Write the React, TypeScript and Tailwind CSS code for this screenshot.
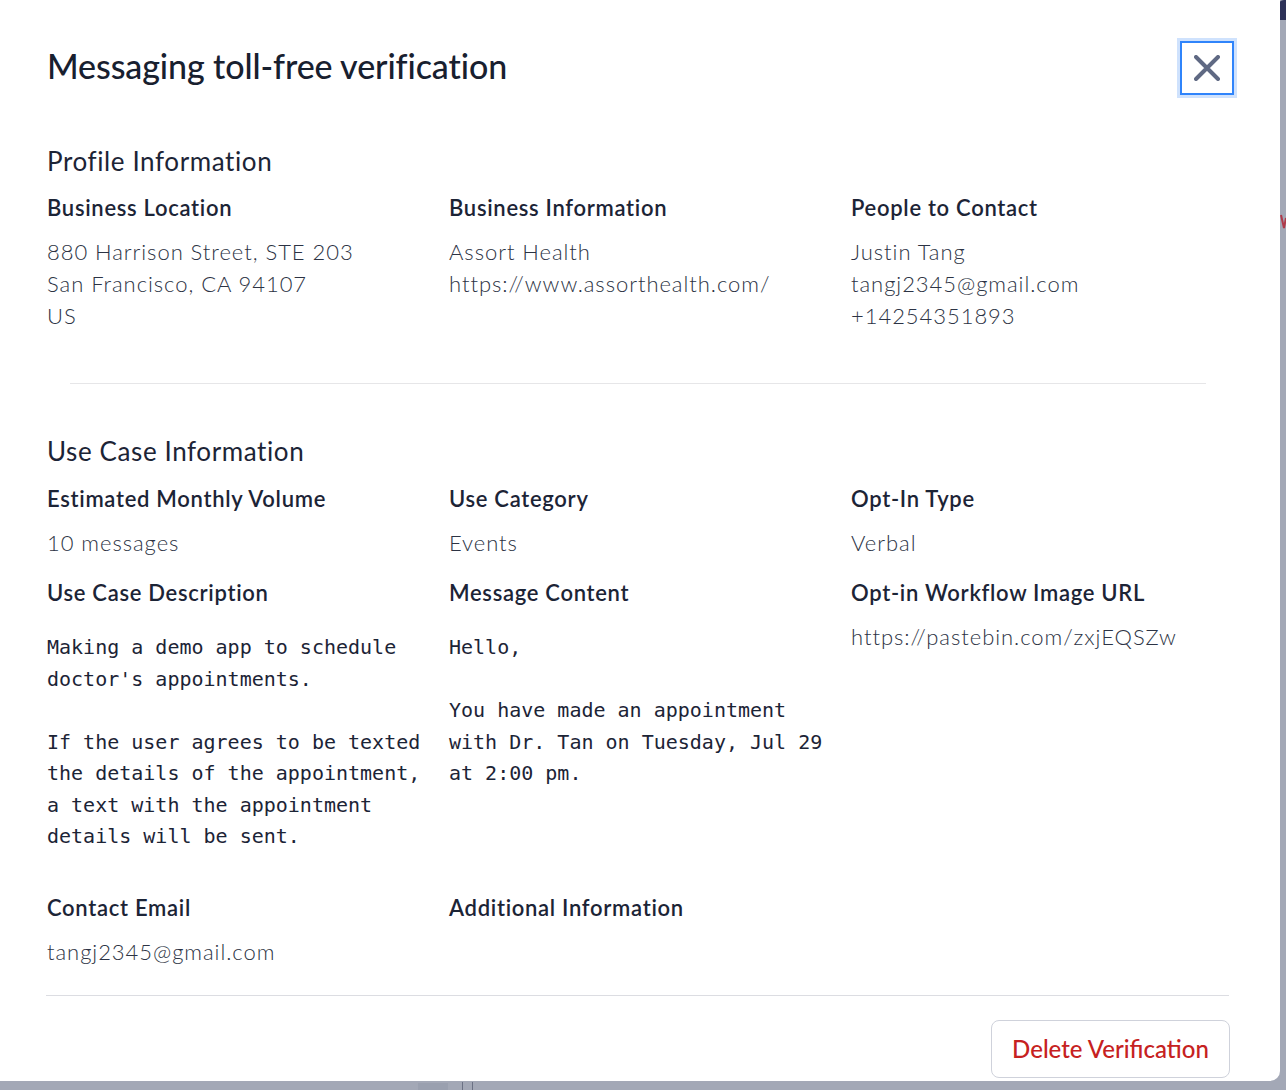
import React from "react";

const sans = { fontFamily: "Lato, 'Open Sans', sans-serif" };
const mono = { fontFamily: "'DejaVu Sans Mono', 'Liberation Mono', monospace" };

function Label({ children }: { children: React.ReactNode }) {
  return (
    <div className="text-[22px] leading-[28px] font-semibold text-[#1c2436] tracking-[0.7px]">
      {children}
    </div>
  );
}

function Value({ children, className = "" }: { children: React.ReactNode; className?: string }) {
  return (
    <div className={"text-[22px] leading-[32px] font-light text-[#2c3344] tracking-[0.95px] " + className}>
      {children}
    </div>
  );
}

function Pre({ children }: { children: React.ReactNode }) {
  return (
    <pre
      style={mono}
      className="mt-[25px] text-[20px] leading-[31.5px] text-[#1c2436] whitespace-pre-wrap"
    >
      {children}
    </pre>
  );
}

export default function App() {
  return (
    <div className="relative w-[1286px] h-[1090px] bg-[#a3a8b6] overflow-hidden" style={sans}>
      {/* background page hints */}
      <div className="absolute right-0 top-0 w-[8px] h-[20px] bg-[#2c3157] rounded-tl-[6px]" />
      <svg className="absolute left-[1280px] top-[214px]" width="6" height="16" viewBox="0 0 6 16">
        <path d="M1 1L4 14L6 4" stroke="#b03a4a" strokeWidth="2" fill="none" />
      </svg>
      <div className="absolute left-[418px] top-[1083px] w-[30px] h-[7px] bg-[#9aa0af]" />
      <div className="absolute left-[462px] top-[1082px] w-[1px] h-[8px] bg-[#6b7184]" />
      <div className="absolute left-[472px] top-[1082px] w-[1px] h-[8px] bg-[#6b7184]" />

      {/* modal */}
      <div className="absolute left-0 top-0 w-[1280px] h-[1081px] bg-white rounded-br-[10px] flex flex-col">
        <div className="flex items-center justify-between pt-[41px] pl-[47px] pr-[46px]">
          <h1 className="-mt-[5px] text-[34px] leading-[41px] font-medium text-[#18202f] tracking-[-0.1px]">
            Messaging toll-free verification
          </h1>
          <button className="w-[54px] h-[54px] border-2 border-[#2f84fb] ring-[3px] ring-[#cfe2fd] flex items-center justify-center bg-white">
            <svg width="26" height="26" viewBox="0 0 26 26" fill="none">
              <path d="M2 2L24 24M24 2L2 24" stroke="#5f6983" strokeWidth="4" strokeLinecap="round" />
            </svg>
          </button>
        </div>

        <div className="pl-[47px] pr-[51px]">
          <h2 className="mt-[50px] text-[26px] leading-[32px] font-normal text-[#1c2436] tracking-[0.6px]">
            Profile Information
          </h2>
          <div className="mt-[17px] grid grid-cols-3 gap-x-[24px]">
            <div>
              <Label>Business Location</Label>
              <Value className="mt-[14px]">
                <div>880 Harrison Street, STE 203</div>
                <div>San Francisco, CA 94107</div>
                <div>US</div>
              </Value>
            </div>
            <div>
              <Label>Business Information</Label>
              <Value className="mt-[14px]">
                <div>Assort Health</div>
                <div>https://www.assorthealth.com/</div>
              </Value>
            </div>
            <div>
              <Label>People to Contact</Label>
              <Value className="mt-[14px]">
                <div>Justin Tang</div>
                <div>tangj2345@gmail.com</div>
                <div>+14254351893</div>
              </Value>
            </div>
          </div>

          <div className="mt-[51px] mx-[23px] h-px bg-[#e6e6e8]" />

          <h2 className="mt-[51px] text-[26px] leading-[32px] font-normal text-[#1c2436] tracking-[0.6px]">
            Use Case Information
          </h2>
          <div className="mt-[18px] grid grid-cols-3 gap-x-[24px]">
            <div>
              <Label>Estimated Monthly Volume</Label>
              <Value className="mt-[14px]">10 messages</Value>
            </div>
            <div>
              <Label>Use Category</Label>
              <Value className="mt-[14px]">Events</Value>
            </div>
            <div>
              <Label>Opt-In Type</Label>
              <Value className="mt-[14px]">Verbal</Value>
            </div>
          </div>

          <div className="mt-[20px] grid grid-cols-3 gap-x-[24px]">
            <div>
              <Label>Use Case Description</Label>
              <Pre>{`Making a demo app to schedule
doctor's appointments.

If the user agrees to be texted
the details of the appointment,
a text with the appointment
details will be sent.`}</Pre>
            </div>
            <div>
              <Label>Message Content</Label>
              <Pre>{`Hello,

You have made an appointment
with Dr. Tan on Tuesday, Jul 29
at 2:00 pm.`}</Pre>
            </div>
            <div>
              <Label>Opt-in Workflow Image URL</Label>
              <Value className="mt-[14px]">https://pastebin.com/zxjEQSZw</Value>
            </div>
          </div>

          <div className="mt-[41px] grid grid-cols-3 gap-x-[24px]">
            <div>
              <Label>Contact Email</Label>
              <Value className="mt-[14px]">tangj2345@gmail.com</Value>
            </div>
            <div>
              <Label>Additional Information</Label>
            </div>
            <div />
          </div>

          <div className="mt-[27px] -ml-px h-px bg-[#dcdde2]" />

          <div className="mt-[24px] flex justify-end">
            <button className="w-[239px] h-[58px] -mr-px border-[1.5px] border-[#cfd2db] rounded-[8px] bg-white text-[24px] font-medium text-[#c62121] tracking-[0px]">
              Delete Verification
            </button>
          </div>
        </div>
      </div>
    </div>
  );
}
